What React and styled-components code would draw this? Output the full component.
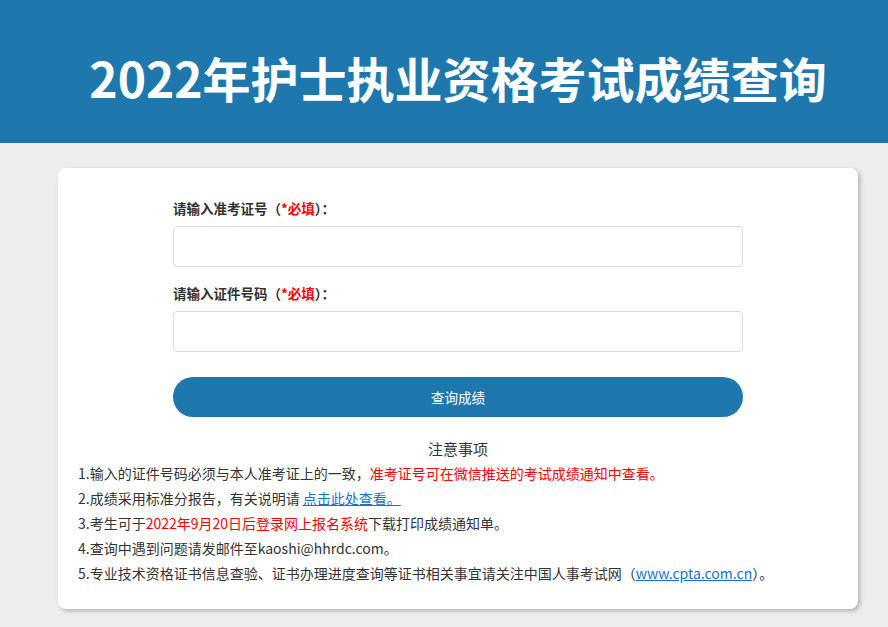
import React from "react";
import styled, { createGlobalStyle } from "styled-components";

const GlobalStyle = createGlobalStyle`
	body {
		margin: 0;
		background-color: #ededed;
		font-family: "Noto Sans CJK SC", "Noto Sans", sans-serif;
		color: #333;
	}
`;

const Header = styled.div`
	background-color: #1f78ad;
	height: 143px;
	display: flex;
	align-items: center;
`;

const Title = styled.h1`
	width: 800px;
	margin: 0 0 0 58px;
	padding-top: 10px;
	text-align: center;
	white-space: nowrap;
	color: #fff;
	font-family: "Noto Sans CJK SC", sans-serif;
	font-size: 48px;
	font-weight: 700;
	line-height: 1;
`;

const Card = styled.div`
	width: 760px;
	margin: 25px 0 18px 58px;
	background-color: #fff;
	border-radius: 8px;
	padding: 30px 20px 23px;
	box-shadow: 2px 2px 4px rgba(0, 0, 0, 0.25);
`;

const Form = styled.div`
	width: 570px;
	margin: 0 auto;
`;

const Field = styled.div`
	margin-bottom: 16px;
`;

const Label = styled.div`
	font-size: 13.5px;
	font-weight: 700;
	line-height: 20px;
	margin-bottom: 8px;
	color: #333;
`;

const Red = styled.span`
	color: #f00;
`;

const Input = styled.input`
	display: block;
	box-sizing: border-box;
	width: 100%;
	height: 41px;
	border: 1px solid #dcdcdc;
	border-radius: 4px;
	outline: none;
	padding: 0 10px;
	font-size: 14px;
`;

const Button = styled.button`
	display: block;
	width: 100%;
	height: 40px;
	margin-top: 25px;
	border: none;
	border-radius: 20px;
	background-color: #1f78ad;
	color: #fff;
	font-family: inherit;
	font-size: 13.5px;
	cursor: pointer;
`;

const NotesTitle = styled.div`
	margin-top: 20px;
	text-align: center;
	font-size: 15px;
	line-height: 24px;
	color: #333;
`;

const Line = styled.div`
	font-size: 14px;
	line-height: 25px;
	color: #333;
`;

const Link = styled.a`
	color: #1a6fd0;
	text-decoration: underline;
`;

export default function App() {
	return (
		<>
			<GlobalStyle />
			<Header>
				<Title>2022年护士执业资格考试成绩查询</Title>
			</Header>
			<Card>
				<Form>
					<Field>
						<Label>请输入准考证号（<Red>*必填</Red>）：</Label>
						<Input type="text" />
					</Field>
					<Field>
						<Label>请输入证件号码（<Red>*必填</Red>）：</Label>
						<Input type="text" />
					</Field>
					<Button>查询成绩</Button>
				</Form>
				<NotesTitle>注意事项</NotesTitle>
				<Line>1.输入的证件号码必须与本人准考证上的一致，<Red>准考证号可在微信推送的考试成绩通知中查看。</Red></Line>
				<Line>2.成绩采用标准分报告，有关说明请 <Link href="#">点击此处查看。</Link></Line>
				<Line>3.考生可于<Red>2022年9月20日后登录网上报名系统</Red>下载打印成绩通知单。</Line>
				<Line>4.查询中遇到问题请发邮件至kaoshi@hhrdc.com。</Line>
				<Line>5.专业技术资格证书信息查验、证书办理进度查询等证书相关事宜请关注中国人事考试网（<Link href="#">www.cpta.com.cn</Link>）。</Line>
			</Card>
		</>
	);
}
